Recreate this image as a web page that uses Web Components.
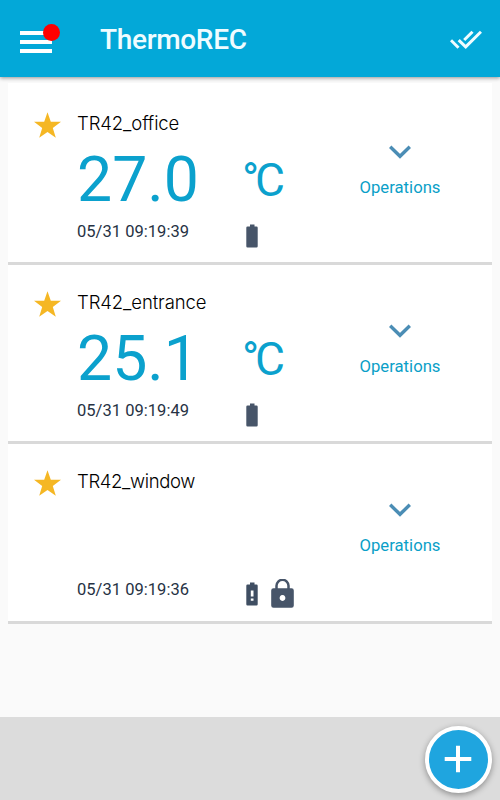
<!DOCTYPE html>
<html lang="en">
<head>
<meta charset="utf-8">
<title>ThermoREC</title>
<style>
body { margin: 0; font-family: Roboto, "Liberation Sans", sans-serif; }
</style>
</head>
<body>
<thermo-app></thermo-app>
<script>
const ICONS = {
  star: [27, 26, '<path fill="#f5b724" d="M13.500 .3l3.300 9.400 10.200.1-8.200 6.200 3 9.700-8.300-5.700-8.300 5.700 3-9.700L0 9.800l10.200-.1z"/>'],
  chevron: [22, 14, '<path fill="none" stroke="#4b8db5" stroke-width="3.400" d="M1.200 1.800L11 11.300l9.800-9.500"/>'],
  battery: [12, 24, '<path fill="#475569" d="M4 .5h4.500v2h2q1.200 0 1.200 1.200v18.600q0 1.200-1.200 1.200h-9q-1.200 0-1.200-1.200V3.700q0-1.200 1.200-1.200H4z"/>'],
  alert: [12, 24, '<path fill="#3f4e62" d="M4 .5h4.500v2h2q1.200 0 1.200 1.200v18.600q0 1.200-1.200 1.200h-9q-1.200 0-1.200-1.200V3.700q0-1.200 1.200-1.200H4z"/><path fill="#fff" d="M4.800 8.500h2.700v6H4.800zM4.800 16.500h2.700v2.300H4.800z"/>'],
  lock: [23, 30, '<path fill="none" stroke="#475569" stroke-width="2.500" d="M5.500 11V6.800a6 6 0 0 1 12 0V11"/><path fill="#475569" fill-rule="evenodd" d="M2.500 9.300h18q2.300 0 2.300 2.300v14.800q0 2.300-2.300 2.300h-18q-2.300 0-2.300-2.300V11.600q0-2.300 2.300-2.300zM11.500 16.100a2.900 2.900 0 1 0 .01 0z"/>'],
  checks: [32, 20, '<path fill="none" stroke="#effcff" stroke-width="3" d="M1 10.200l7.500 7.500M22.500 1.700l-8.300 8.300M8.700 10.200l7 6.700L31 1.700"/>'],
  plus: [28, 28, '<path fill="none" stroke="#fff" stroke-width="4" d="M14 .7v26.600M.7 14h26.600"/>']
};

class TrIcon extends HTMLElement {
  connectedCallback() {
    const [w, h, art] = ICONS[this.getAttribute('name')];
    this.attachShadow({ mode: 'open' }).innerHTML =
      `<style>:host{display:block;width:${w}px;height:${h}px;flex:none}svg{display:block}</style>
       <svg width="${w}" height="${h}" viewBox="0 0 ${w} ${h}">${art}</svg>`;
  }
}
customElements.define('tr-icon', TrIcon);

function define(name, html) {
  const t = document.createElement('template');
  t.innerHTML = html;
  customElements.define(name, class extends HTMLElement {
    constructor() {
      super();
      this.attachShadow({ mode: 'open' }).append(t.content.cloneNode(true));
    }
  });
}

define('menu-button', `
<style>
:host{display:block;width:32px;height:22px;position:relative}
.lines{display:flex;flex-direction:column;gap:5px}
i{display:block;height:4px;background:#fff}
b{position:absolute;left:22.500px;top:-7.500px;width:17px;height:17px;border-radius:50%;background:#fe0000}
</style><div class="lines"><i></i><i></i><i></i></div><b></b>`);

define('app-bar', `
<style>
:host{display:flex;align-items:center;height:77px;box-sizing:border-box;padding:3px 18px 0 20px;background:#03a8d8;box-shadow:0 1px 4px #0000006b;z-index:1}
h1{margin:0 auto 0 48px;font-weight:500;font-size:28px;line-height:34px;letter-spacing:-.32px;color:#effcff;padding-bottom:1px}
tr-icon{margin-bottom:1px}
menu-button{margin-top:4px}
</style><menu-button></menu-button><h1><slot></slot></h1><tr-icon name="checks"></tr-icon>`);

define('device-card', `
<style>
:host{display:grid;grid-template-columns:69px 165px 98px 120px;grid-template-rows:29px 84px 34px;box-sizing:border-box;height:179px;padding-top:23px;border-bottom:3px solid #d9d9d9;background:#fff}
.star{margin:3px 0 0 25.500px}
.name{grid-column:2/4;font:300 18.500px/28px Inter,"Liberation Sans",sans-serif;letter-spacing:-.1px;color:#000}
.name,.time,.value,.unit{white-space:nowrap}
.value{grid-area:2/2;font-size:62.500px;line-height:84px;color:#0ba1cd}
.unit{grid-area:2/3;font-size:46px;line-height:84px;letter-spacing:-4.300px;color:#0ba1cd}
.time{grid-area:3/2;font-size:16.500px;line-height:20px;letter-spacing:.03px;color:#263244}
.icons{grid-area:3/3;display:flex;align-items:center;gap:13px;height:27px;padding-left:4px}
.ops{grid-area:1/4/4/5;display:flex;flex-direction:column;align-items:center;padding-top:36px;gap:18px;color:#0b9fc8;font-size:16.700px;line-height:22px}
</style>
<tr-icon class="star" name="star"></tr-icon>
<div class="name"><slot name="name"></slot></div>
<div class="value"><slot name="value"></slot></div>
<div class="unit"><slot name="unit"></slot></div>
<div class="time"><slot name="time"></slot></div>
<div class="icons"><slot name="status"></slot></div>
<div class="ops"><tr-icon name="chevron"></tr-icon><span>Operations</span></div>`);

define('add-button', `
<style>
:host{display:grid;place-items:center;box-sizing:border-box;width:67px;height:67px;border:4px solid #fff;border-radius:50%;background:#1fa5df;box-shadow:0 2px 6px #00000060}
</style><tr-icon name="plus"></tr-icon>`);

define('bottom-bar', `
<style>:host{display:flex;justify-content:flex-end;align-items:center;box-sizing:border-box;height:83px;padding:1px 8.500px 0 0;background:#dcdcdc}</style><slot></slot>`);

define('thermo-app', `
<style>
:host{display:flex;flex-direction:column;height:800px;background:#fafafa;overflow:hidden}
main{flex:1;padding:6px 8.500px 0 8px}
.first{border-top:3px solid #fff;height:182px}
.last{height:180px}
.narrow{letter-spacing:-.36px}
</style>
<app-bar>ThermoREC</app-bar>
<main>
<device-card class="first"><span slot="name">TR42_office</span><span slot="value">27.0</span><span slot="unit">°C</span><span slot="time">05/31 09:19:39</span><tr-icon slot="status" name="battery"></tr-icon></device-card>
<device-card><span slot="name">TR42_entrance</span><span slot="value">25.1</span><span slot="unit">°C</span><span slot="time">05/31 09:19:49</span><tr-icon slot="status" name="battery"></tr-icon></device-card>
<device-card class="last"><span slot="name" class="narrow">TR42_window</span><span slot="time">05/31 09:19:36</span><tr-icon slot="status" name="alert"></tr-icon><tr-icon slot="status" name="lock"></tr-icon></device-card>
</main>
<bottom-bar><add-button></add-button></bottom-bar>`);
</script>
</body>
</html>
